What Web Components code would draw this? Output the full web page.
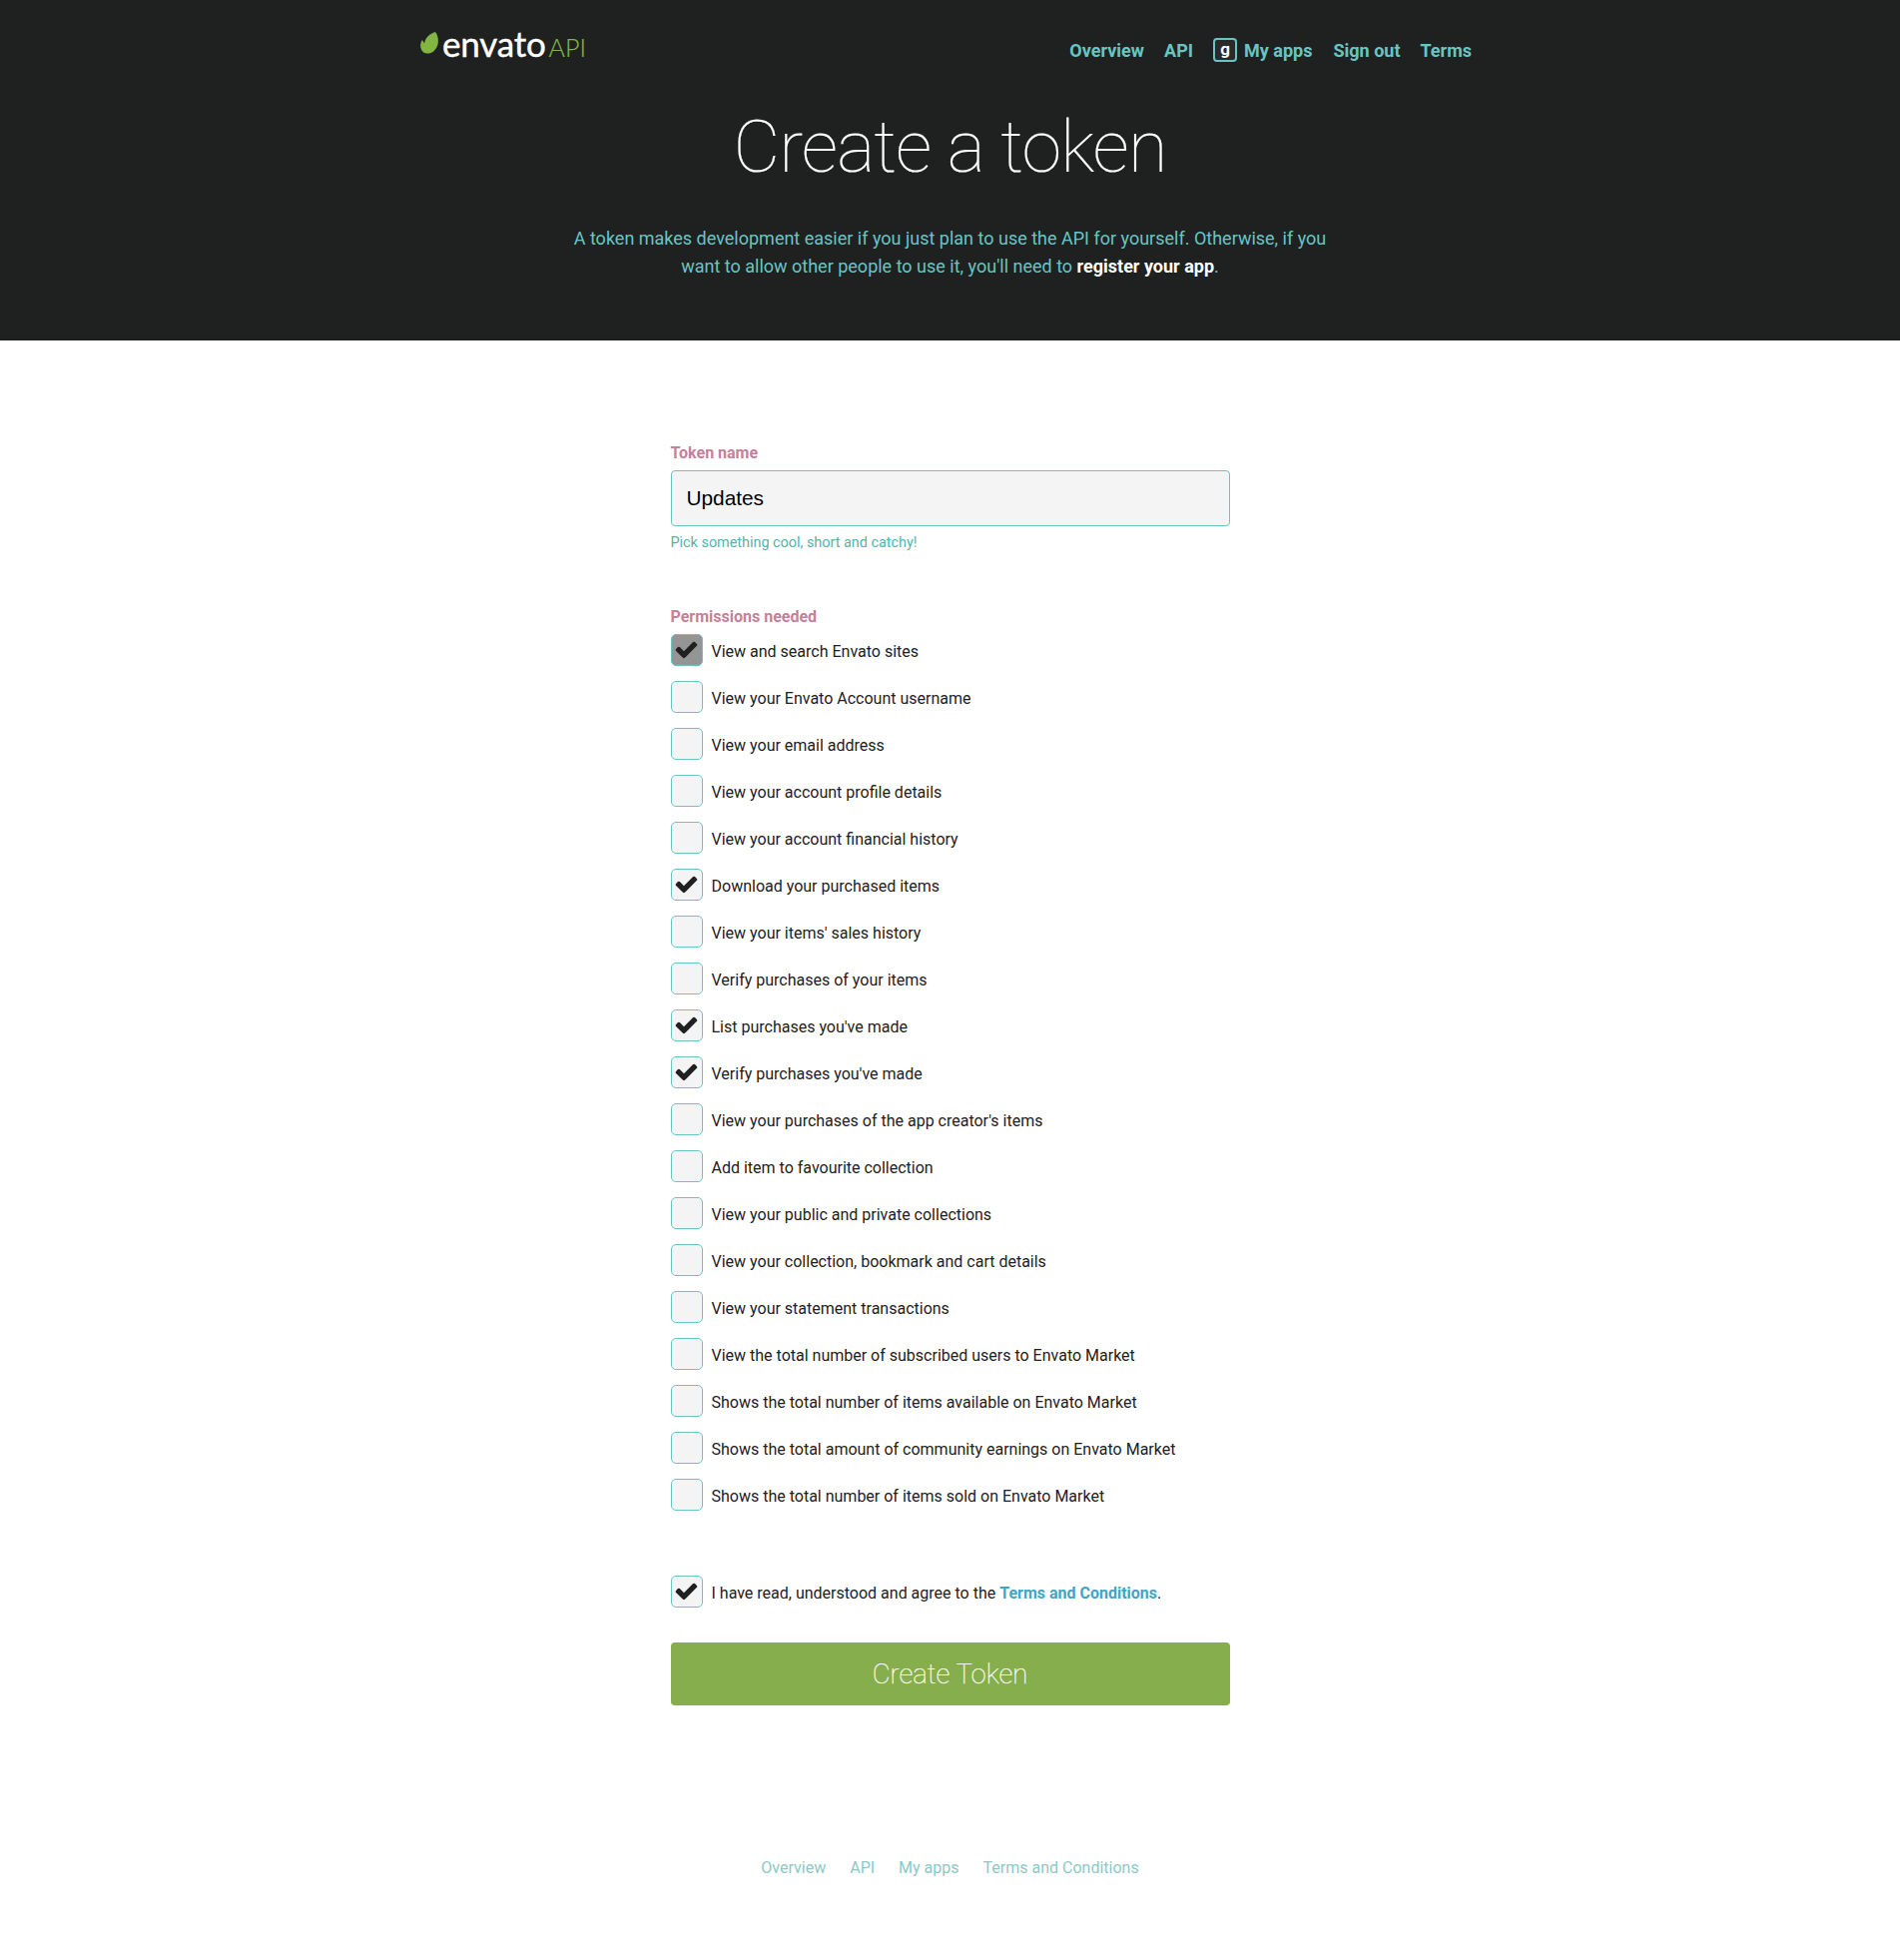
<!DOCTYPE html>
<html lang="en">
<head>
<meta charset="utf-8">
<title>Create a token</title>
<style>
    html, body { margin: 0; padding: 0; background: #fff; }
    body { font-family: Roboto, "Liberation Sans", sans-serif; color: #1f2120; }
</style>
</head>
<body>
<api-header>
    <span slot="title">Create a token</span>
    A token makes development easier if you just plan to use the API for yourself. Otherwise, if you<br>
    want to allow other people to use it, you'll need to <b>register your app</b>.
</api-header>
<token-form></token-form>
<api-footer></api-footer>

<script>
const CHECK = `<svg viewBox="0 0 1792 1792" width="25" height="25" aria-hidden="true" style="margin-top:-2px"><path d="M1671 566q0 40-28 68l-724 724-136 136q-28 28-68 28t-68-28l-136-136-362-362q-28-28-28-68t28-68l136-136q28-28 68-28t68 28l294 295 656-657q28-28 68-28t68 28l136 136q28 28 28 68z" fill="#1f2120"/></svg>`;

class ApiHeader extends HTMLElement {
    constructor() {
        super();
        this.attachShadow({ mode: 'open' });
        this.shadowRoot.innerHTML = `
            <style>
                :host {
                    display: block;
                    height: 341px;
                    box-sizing: border-box;
                    background: #1f2120;
                    font-family: Roboto, sans-serif;
                }
                .top {
                    width: 1053px;
                    margin: 0 0 0 421px;
                    padding-top: 28px;
                    display: flex;
                    justify-content: space-between;
                    align-items: flex-start;
                }
                .logo {
                    display: flex;
                    align-items: baseline;
                    line-height: 36px;
                    height: 36px;
                    margin-top: -3px;
                    color: #fff;
                }
                .logo svg { align-self: center; margin-right: 3px; }
                .word { font-family: Lato, sans-serif; font-size: 35px; letter-spacing: -0.2px; -webkit-text-stroke: 0.4px #fff; }
                .api { font-family: Lato, sans-serif; font-weight: 300; font-size: 25px; color: #82b541; margin-left: 3px; -webkit-text-stroke: 0.2px #82b541; }
                nav {
                    display: flex;
                    gap: 20px;
                    align-items: center;
                    height: 44px;
                }
                nav a {
                    color: #68c5c4;
                    font-size: 18px;
                    font-weight: 700;
                    text-decoration: none;
                    display: flex;
                    align-items: center;
                }
                nav a.apps { margin-right: 1px; }
                .avatar {
                    box-sizing: border-box;
                    width: 24px;
                    height: 24px;
                    border: 2px solid #68c5c4;
                    border-radius: 4px;
                    background: #2a2a2a;
                    color: #fff;
                    font-size: 17px;
                    font-weight: 700;
                    line-height: 19px;
                    text-align: center;
                    margin-right: 7px;
                }
                h1 {
                    margin: 36px 0 0;
                    text-align: center;
                    color: #fff;
                    font-size: 72px;
                    font-weight: 100;
                    letter-spacing: -0.9px;
                    line-height: 80px;
                    -webkit-text-stroke: 0.2px #fff;
                }
                p {
                    margin: 37px 0 0;
                    text-align: center;
                    color: #68c5c4;
                    font-size: 18px;
                    line-height: 28px;
                }
                ::slotted(b) { color: #fff; }
            </style>
            <div class="top">
                <div class="logo">
                    <svg width="19" height="22" viewBox="0 0 19 22"><path d="M15 0 C17.5 3 18.5 8 17.5 12.5 C16 18.5 11 22 6.5 21.5 C2 21 -0.5 16.5 0.3 12 C0.6 10.5 1.2 9 2 8 L4 11.5 C5 6 9.5 1.5 15 0 Z" fill="#82b541"/></svg>
                    <span class="word">envato</span><span class="api">API</span>
                </div>
                <nav>
                    <a href="#">Overview</a>
                    <a href="#">API</a>
                    <a href="#" class="apps"><span class="avatar">g</span>My apps</a>
                    <a href="#">Sign out</a>
                    <a href="#">Terms</a>
                </nav>
            </div>
            <h1><slot name="title"></slot></h1>
            <p><slot></slot></p>
        `;
    }
}

class CheckRow extends HTMLElement {
    constructor() {
        super();
        this.attachShadow({ mode: 'open' });
    }

    static get observedAttributes() {
        return ['checked', 'disabled'];
    }

    connectedCallback() {
        this.render();
    }

    attributeChangedCallback(name, oldValue, newValue) {
        if (oldValue !== newValue) {
            this.render();
        }
    }

    render() {
        const checked = this.hasAttribute('checked');
        const disabled = this.hasAttribute('disabled');
        this.shadowRoot.innerHTML = `
            <style>
                :host {
                    display: flex;
                    align-items: center;
                    height: 32px;
                    font-size: 16px;
                    color: #1f2120;
                }
                .box {
                    box-sizing: border-box;
                    flex: none;
                    width: 32px;
                    height: 32px;
                    margin-right: 9px;
                    border: 1px solid #68c5c4;
                    border-radius: 5px;
                    background: ${disabled ? '#959595' : '#f4f4f4'};
                    display: flex;
                    align-items: center;
                    justify-content: center;
                }
                .label { position: relative; top: 1px; }
            </style>
            <span class="box">${checked ? CHECK : ''}</span>
            <span class="label"><slot></slot></span>
        `;
    }
}

class TokenForm extends HTMLElement {
    constructor() {
        super();
        this.attachShadow({ mode: 'open' });
        const perms = [
            ['View and search Envato sites', 'checked disabled'],
            ['View your Envato Account username'],
            ['View your email address'],
            ['View your account profile details'],
            ['View your account financial history'],
            ['Download your purchased items', 'checked'],
            ["View your items' sales history"],
            ['Verify purchases of your items'],
            ["List purchases you've made", 'checked'],
            ["Verify purchases you've made", 'checked'],
            ["View your purchases of the app creator's items"],
            ['Add item to favourite collection'],
            ['View your public and private collections'],
            ['View your collection, bookmark and cart details'],
            ['View your statement transactions'],
            ['View the total number of subscribed users to Envato Market'],
            ['Shows the total number of items available on Envato Market'],
            ['Shows the total amount of community earnings on Envato Market'],
            ['Shows the total number of items sold on Envato Market'],
        ];
        const rows = perms.map(([text, attrs]) => `<check-row ${attrs || ''}>${text}</check-row>`).join('');
        this.shadowRoot.innerHTML = `
            <style>
                :host {
                    display: block;
                    width: 560px;
                    margin: 0 auto;
                    padding-top: 103px;
                    font-family: Roboto, sans-serif;
                }
                label {
                    display: block;
                    color: #c77f9a;
                    font-size: 16px;
                    font-weight: 700;
                    line-height: 20px;
                }
                .field {
                    box-sizing: border-box;
                    width: 100%;
                    height: 56px;
                    margin-top: 7px;
                    padding: 0 15px;
                    border: 1px solid #68c5c4;
                    border-radius: 4px;
                    background: #f4f4f4;
                    color: #000;
                    font: 400 20.8px "Liberation Sans", Arial, sans-serif;
                    display: block;
                }
                .hint {
                    margin-top: 8px;
                    color: #54b3af;
                    font-size: 14.4px;
                    line-height: 18px;
                }
                .perms-label { margin-top: 55px; }
                .rows { display: grid; gap: 15px; margin-top: 7px; }
                .agree { margin-top: 65px; }
                .agree a { color: #3fa5c4; font-weight: 700; text-decoration: none; }
                button {
                    display: block;
                    width: 100%;
                    height: 63px;
                    margin-top: 35px;
                    border: 0;
                    border-radius: 4px;
                    background: #86ae4d;
                    color: #fff;
                    font: 100 27.5px Roboto, sans-serif;
                    -webkit-text-stroke: 0.25px #fff;
                }
            </style>
            <label>Token name</label>
            <input class="field" value="Updates">
            <div class="hint">Pick something cool, short and catchy!</div>
            <label class="perms-label">Permissions needed</label>
            <div class="rows">${rows}</div>
            <check-row class="agree" checked>I have read, understood and agree to the&nbsp;<a href="#">Terms and Conditions</a>.</check-row>
            <button>Create Token</button>
        `;
    }
}

class ApiFooter extends HTMLElement {
    constructor() {
        super();
        this.attachShadow({ mode: 'open' });
        this.shadowRoot.innerHTML = `
            <style>
                :host {
                    display: flex;
                    justify-content: center;
                    gap: 24px;
                    padding: 153px 0 49px;
                    font-family: Roboto, sans-serif;
                    font-size: 16px;
                    line-height: 20px;
                }
                a { color: #8cc9c5; text-decoration: none; }
            </style>
            <a href="#">Overview</a>
            <a href="#">API</a>
            <a href="#">My apps</a>
            <a href="#">Terms and Conditions</a>
        `;
    }
}

customElements.define('api-header', ApiHeader);
customElements.define('check-row', CheckRow);
customElements.define('token-form', TokenForm);
customElements.define('api-footer', ApiFooter);
</script>
</body>
</html>
